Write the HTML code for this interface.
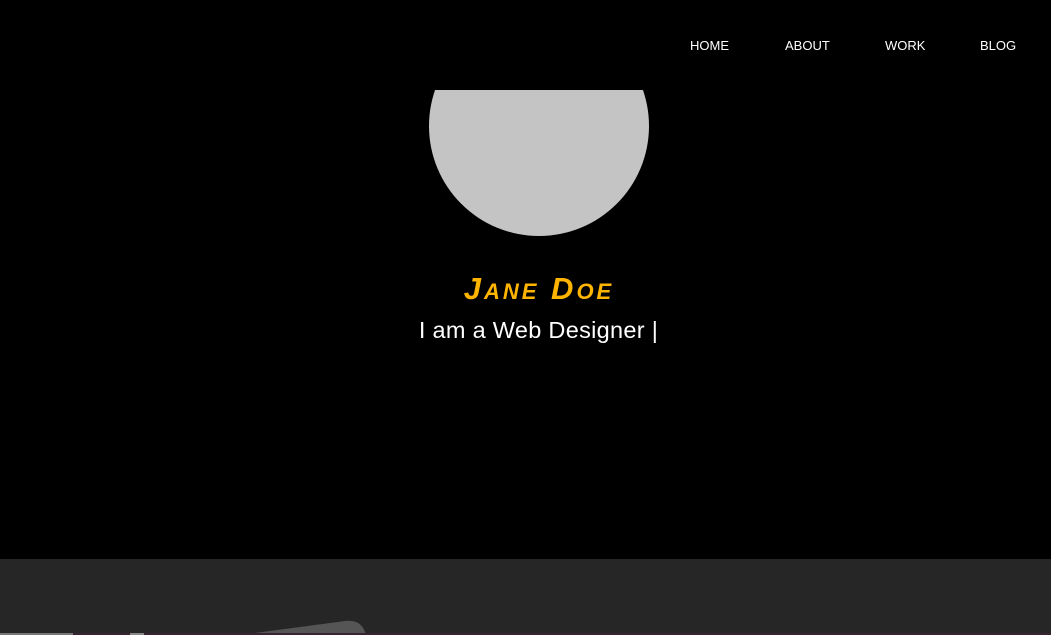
<!DOCTYPE html>
<html><head><meta charset="utf-8"><style>
html,body{margin:0;padding:0;width:1051px;height:635px;overflow:hidden;background:#000;font-family:"Liberation Sans",sans-serif}
.wrap{position:relative;width:1051px;height:635px;overflow:hidden}
nav{position:absolute;top:38px;font-size:13px;color:#fff}
nav span{position:absolute;white-space:nowrap}
.circle{position:absolute;left:429px;top:16px;width:220px;height:220px;border-radius:50%;background:#c4c4c4}
.cover{position:absolute;left:400px;top:0;width:300px;height:90px;background:#000}
h1{position:absolute;left:0;width:1078px;top:271px;margin:0;text-align:center;color:#ffb400;font-size:31px;line-height:36px;font-weight:900;font-style:italic;font-variant:small-caps;letter-spacing:3px}
.sub{position:absolute;left:0;width:1077px;top:316px;line-height:28px;text-align:center;color:#fff;font-size:23.5px;letter-spacing:0.3px}
.dark{position:absolute;left:0;top:559px;width:1051px;height:76px;background:#262626}
svg{position:absolute;left:0;top:559px}
</style></head><body><div class="wrap">
<div class="circle"></div><div class="cover"></div>
<nav><span style="left:690px">HOME</span><span style="left:785px">ABOUT</span><span style="left:885px">WORK</span><span style="left:980px">BLOG</span></nav>
<h1>Jane Doe</h1>
<div class="sub">I am a Web Designer |</div>
<div class="dark"></div>
<svg width="1051" height="76" viewBox="0 0 1051 76">
<path d="M240 76 L345 62 Q362 60 366 76 Z" fill="#555"/>
<rect x="0" y="74" width="1051" height="2" fill="#3a2330"/>
<rect x="0" y="74" width="73" height="2" fill="#777"/>
<rect x="130" y="74" width="14" height="2" fill="#888"/>
</svg>
</div></body></html>
